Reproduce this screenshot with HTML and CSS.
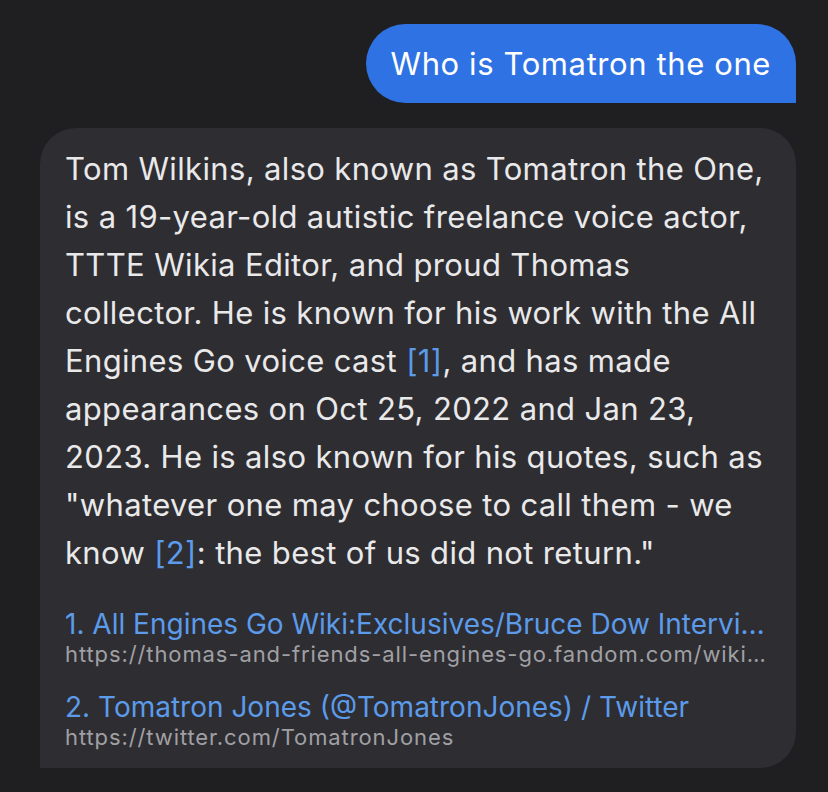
FILE: index.html
```html
<!DOCTYPE html>
<html lang="en">

<head>
    <meta charset="UTF-8">
    <meta name="viewport" content="width=device-width, initial-scale=1.0">
    <title>Chat</title>
    <link rel="stylesheet" href="styles.css">
</head>

<body>

    <div id="chat">
        <div class="message user">
            <div class="bubble">Who is Tomatron the one</div>
        </div>

        <div class="message bot">
            <div class="bubble">
                <p class="answer">
                    Tom Wilkins, also known as Tomatron the One, is a 19-year-old autistic freelance voice actor,
                    TTTE Wikia Editor, and proud Thomas collector. He is known for his work with the All
                    Engines Go voice cast <span class="cite">[1]</span>, and has made appearances on Oct 25, 2022 and
                    Jan 23, 2023. He is also known for his quotes, such as "whatever one may choose to call them - we
                    know <span class="cite">[2]</span>: the best of us did not return."
                </p>

                <div class="sources">
                    <div class="source">
                        <div class="sourceTitle">1. All Engines Go Wiki:Exclusives/Bruce Dow Interview</div>
                        <div class="sourceUrl">https://thomas-and-friends-all-engines-go.fandom.com/wiki/All_Engines_Go_Wiki:Exclusives/Bruce_Dow_Interview</div>
                    </div>
                    <div class="source">
                        <div class="sourceTitle">2. Tomatron Jones (@TomatronJones) / Twitter</div>
                        <div class="sourceUrl">https://twitter.com/TomatronJones</div>
                    </div>
                </div>
            </div>
        </div>
    </div>

</body>

</html>
```

FILE: styles.css
```css
body {
    font-family: 'Inter', 'Noto Sans', sans-serif;
    background: #1f1f22;
    margin: 0;
    padding: 0;
}

#chat {
    display: flex;
    flex-direction: column;
    gap: 25px;
    padding: 24px 32px 24px 40px;
}

.message {
    display: flex;
}

.message.user {
    justify-content: flex-end;
}

.bubble {
    box-sizing: border-box;
}

.user .bubble {
    background: #2f72e4;
    color: #ffffff;
    font-size: 31px;
    letter-spacing: 0.6px;
    line-height: 79px;
    height: 79px;
    padding: 0 25px;
    border-radius: 40px 40px 0 40px;
}

.bot .bubble {
    width: 100%;
    background: #2e2d32;
    color: #e9e9ea;
    border-radius: 36px 36px 36px 0;
    padding: 17px 25px 18px 25px;
}

.answer {
    margin: 0;
    font-size: 31px;
    letter-spacing: 0.35px;
    line-height: 48px;
}

.cite {
    color: #5b9bea;
}

.sources {
    display: flex;
    flex-direction: column;
    gap: 24px;
    margin-top: 31px;
}

.sourceTitle,
.sourceUrl {
    white-space: nowrap;
    overflow: hidden;
    text-overflow: ellipsis;
}

.sourceTitle {
    color: #5b9bea;
    font-size: 28px;
    line-height: 33px;
}

.sourceUrl {
    color: #a0a0a4;
    font-size: 22px;
    letter-spacing: 0.9px;
    line-height: 26px;
}
```
